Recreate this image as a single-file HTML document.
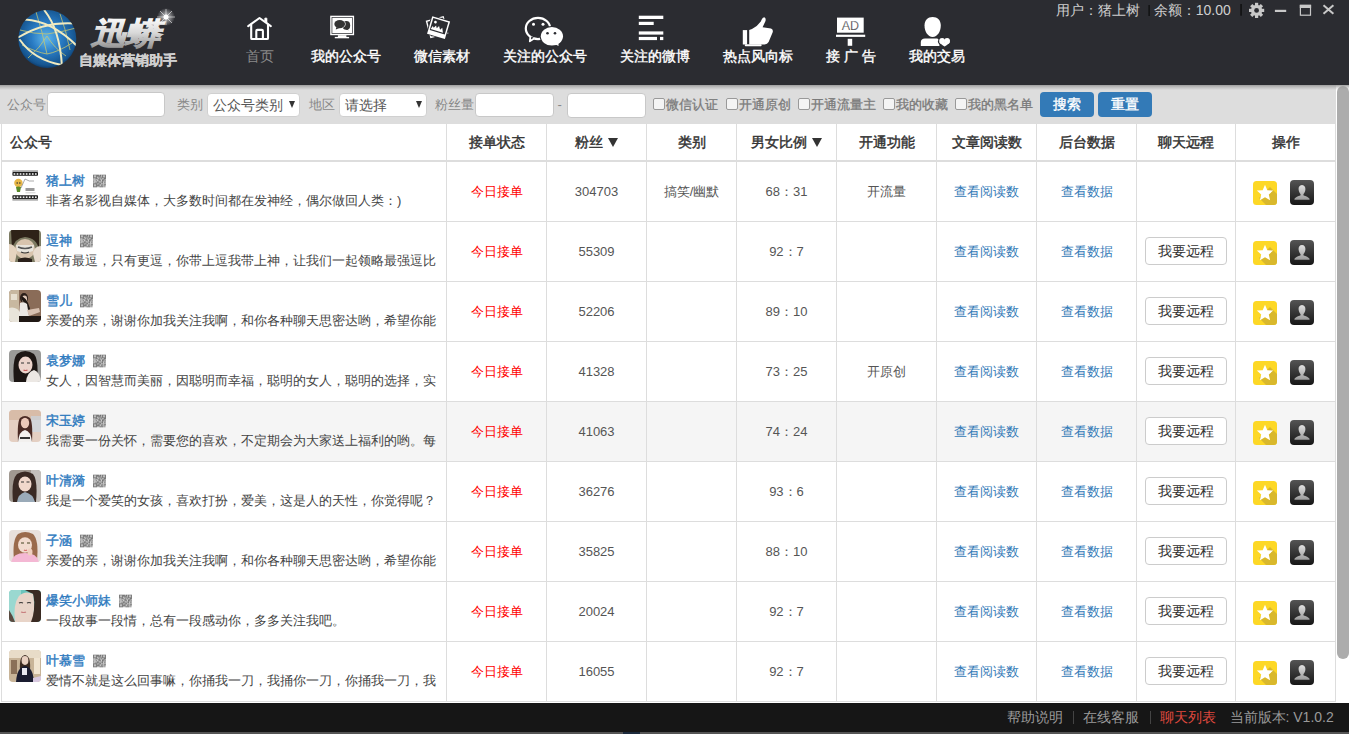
<!DOCTYPE html><html><head><meta charset="utf-8"><style>
*{box-sizing:border-box}
html,body{margin:0;padding:0;width:1349px;height:734px;overflow:hidden;background:#fff;font-family:"Liberation Sans",sans-serif;}
.abs{position:absolute}
#hdr{position:absolute;left:0;top:0;width:1349px;height:85px;background:#2b2c31}
.nav{position:absolute;top:0;height:85px;text-align:center}
.nav .lbl{position:absolute;left:-60px;right:-60px;top:46px;font-size:14px;line-height:20px;color:#fff;font-weight:normal;-webkit-text-stroke:0.4px #fff;white-space:nowrap}
.nav svg{position:absolute}
#tr{position:absolute;top:0;left:1056px;font-size:14px;line-height:20px;color:#cfcfcf;white-space:nowrap}
#filter{position:absolute;left:0;top:85px;width:1336px;height:39px;background:#dddddd}
.fl{position:absolute;top:0;line-height:39px;font-size:13px;color:#888;white-space:nowrap}
.inp{position:absolute;top:7px;height:24.5px;background:#fff;border-radius:4px;border:1px solid #c8c8c8}
.sel{position:absolute;top:7px;height:24px;background:#fff;border-radius:4px;font-size:14px;color:#555;line-height:22px;padding-left:5px;border:1px solid #d0d0d0}
.sarr{position:absolute;top:7.5px;width:0;height:0;border-left:3px solid transparent;border-right:3px solid transparent;border-top:7px solid #333}
.cb{position:absolute;top:13px;width:12px;height:12px;border:1px solid #999;border-radius:2px;background:#f4f4f4}
.btn{position:absolute;top:6px;width:54px;height:26px;background:#337ab7;border-radius:4px;color:#fff;font-size:14px;line-height:26px;text-align:center;font-weight:normal;-webkit-text-stroke:0.35px #fff}
#tbl{position:absolute;left:0;top:124px;width:1336px;height:578px;background:#fff}
.vl{position:absolute;width:1px;background:#dddddd}
.hl{position:absolute;height:1px;background:#dddddd;left:1px;width:1335px}
.th{position:absolute;top:124px;height:36px;line-height:36px;font-size:14px;font-weight:normal;-webkit-text-stroke:0.45px #333;color:#333;text-align:center;white-space:nowrap}
.tri{display:inline-block;width:0;height:0;border-left:5.3px solid transparent;border-right:5.3px solid transparent;border-top:9.3px solid #333;vertical-align:0px;margin-left:2px}
.td{position:absolute;font-size:13px;color:#555;text-align:center;white-space:nowrap}
.nm{position:absolute;left:46px;font-size:13px;font-weight:normal;-webkit-text-stroke:0.4px #2f7bbf;color:#2f7bbf;white-space:nowrap;line-height:16px}
.ds{position:absolute;left:46px;font-size:13px;color:#444;white-space:nowrap;line-height:16px}
.av{position:absolute;left:9px;width:32px;height:32px;border-radius:4px;overflow:hidden}
.qr{position:absolute;width:13px;height:14px}
.rbtn{position:absolute;left:1145px;width:82px;height:28px;border:1px solid #cccccc;border-radius:4px;background:#fff;font-size:14px;color:#333;line-height:26px;text-align:center}
.link{color:#337ab7}
.red{color:#ff0000}
#sb{position:absolute;left:1336px;top:85px;width:13px;height:618px;background:#fff}
#thumb{position:absolute;left:1337px;top:86px;width:12px;height:573px;background:#acacac;border-radius:6px}
#ftr{position:absolute;left:0;top:703px;width:1349px;height:29px;background:#161616}
#ftr2{position:absolute;left:0;top:732px;width:1349px;height:2px;background:#555}
.ft{position:absolute;top:703px;line-height:29px;font-size:14px;color:#9a9a9a;white-space:nowrap}
</style></head><body>
<div id="hdr"></div>
<svg class="abs" style="left:0;top:0" width="200" height="85" viewBox="0 0 200 85">
<defs>
<radialGradient id="gl" cx="0.5" cy="0.45" r="0.58" fx="0.48" fy="0.5"><stop offset="0" stop-color="#62b8ec"/><stop offset="0.45" stop-color="#2a7cc4"/><stop offset="0.85" stop-color="#16558f"/><stop offset="1" stop-color="#0a2e58"/></radialGradient>
<linearGradient id="sv" x1="0" y1="0" x2="0" y2="1"><stop offset="0" stop-color="#ffffff"/><stop offset="0.5" stop-color="#d8d8d8"/><stop offset="1" stop-color="#8a8a8a"/></linearGradient>
<linearGradient id="sv2" x1="0" y1="0" x2="0" y2="1"><stop offset="0" stop-color="#ffffff"/><stop offset="1" stop-color="#b0b0b0"/></linearGradient>
<radialGradient id="spk" cx="0.5" cy="0.5" r="0.5"><stop offset="0" stop-color="#fff" stop-opacity="1"/><stop offset="1" stop-color="#fff" stop-opacity="0"/></radialGradient>
</defs>
<defs><clipPath id="gcl"><circle cx="47.3" cy="39" r="29"/></clipPath></defs>
<circle cx="47.3" cy="39" r="29" fill="url(#gl)"/>
<g clip-path="url(#gcl)" fill="none">
<g stroke="#c9c870" stroke-width="0.9" opacity="0.85">
<path d="M22 45 Q36 52 47 54 Q58 52 72 43"/>
<path d="M28 58 Q40 48 47 36 Q54 48 66 56"/>
<path d="M20 30 Q34 34 47 34 Q62 32 76 28"/>
<path d="M36 12 Q42 30 47 54"/>
<path d="M60 14 Q66 30 70 50"/>
</g>
<g stroke="#f0eac0" stroke-width="2" stroke-linecap="round">
<path d="M19 37 Q45 21 76 23.5"/>
<path d="M25 19.5 Q52 21 77 46"/>
<path d="M20 40 Q34 60 62 65"/>
<path d="M44.5 10.5 Q60 30 62 67"/>
</g>
</g>
<g transform="translate(90.5 43.6) skewX(-16) scale(1.03 0.9)"><text x="0" y="0" font-family="Liberation Sans" font-size="34" font-weight="bold" fill="url(#sv)" stroke="url(#sv)" stroke-width="1.2" letter-spacing="0">迅蟒</text></g>
<g transform="translate(166 17)">
<circle r="9" fill="url(#spk)" opacity="0.8"/>
<path d="M-9 0 L9 0 M0 -8 L0 8 M-6 -6 L6 6 M-6 6 L6 -6" stroke="#fff" stroke-width="0.8" opacity="0.7"/>
<circle r="2.5" fill="#fff"/>
</g>
<text x="79" y="65" font-family="Liberation Sans" font-size="14" font-weight="bold" fill="url(#sv2)" stroke="#cfcfcf" stroke-width="0.3">自媒体营销助手</text>
</svg>
<svg class="abs" style="left:0;top:0" width="1349" height="85" viewBox="0 0 1349 85">
<!-- house -->
<g fill="none" stroke="#fff" stroke-width="2.1" stroke-linecap="round" stroke-linejoin="round">
<polyline points="248.2,26.2 259.5,18 270.8,26.2"/>
<path d="M251.2 24.5 V38.2 Q251.2 39 252 39 H267 Q268 39 268 38.2 V24.5"/>
<path d="M256.3 38.5 V30.9 Q256.3 29.9 257.3 29.9 H261.9 Q262.9 29.9 262.9 30.9 V38.5"/>
</g>
<path d="M264.7 21.2 V18.6 Q264.7 17.9 265.4 17.9 H266.3 Q267 17.9 267 18.6 V23" fill="#fff" stroke="#fff" stroke-width="0.6"/>
<!-- monitor -->
<rect x="330.2" y="15.7" width="23.9" height="19.5" fill="#fff"/>
<rect x="331.6" y="17.1" width="21.1" height="16.7" fill="#2b2c31"/>
<rect x="332.3" y="17.8" width="19.7" height="15.3" fill="#fff"/>
<ellipse cx="346.3" cy="25.4" rx="3.9" ry="4.3" fill="#333"/>
<path d="M347 28.5 L348.8 30.2 L345.5 29.5 Z" fill="#333"/>
<ellipse cx="339.7" cy="24.1" rx="6" ry="4.6" fill="#fff"/>
<ellipse cx="339.7" cy="24.1" rx="5.4" ry="4.1" fill="#333"/>
<path d="M336.2 27.2 L335.8 29.6 L339.5 28 Z" fill="#333"/>
<rect x="337.9" y="35.2" width="8.5" height="1.9" fill="#fff"/>
<rect x="334.8" y="36.9" width="14.3" height="1.4" fill="#fff"/>
<!-- photos -->
<g transform="translate(438.6 27.6)">
<g transform="translate(-1.6 -0.6) rotate(-15)"><rect x="-9.3" y="-9" width="18.6" height="18.2" fill="#fff"/><rect x="-7.9" y="-7.6" width="15.8" height="15.4" fill="#2b2c31"/></g>
<g transform="rotate(16.6)">
<rect x="-10.2" y="-10" width="20.4" height="20" fill="#2b2c31"/>
<rect x="-9.3" y="-9.1" width="18.6" height="18.3" fill="#fff"/>
<rect x="-7.8" y="-7.6" width="15.6" height="12.4" fill="#2b2c31"/>
<path d="M-7.2 3.6 L-6 0.2 L-4.6 1.6 L-3 -1.2 L-1.6 1.2 L0 -1.6 L2 1.6 L3.6 -0.8 L5.6 3.6 Z" fill="#fff"/>
<circle cx="-4.6" cy="-4.4" r="1.4" fill="#fff"/>
</g>
</g>
<!-- wechat -->
<g>
<ellipse cx="538" cy="28.5" rx="12.2" ry="10.6" fill="none" stroke="#fff" stroke-width="2.2"/>
<path d="M530.5 36 L529.8 41.3 L534.5 38.2" fill="#2b2c31" stroke="#fff" stroke-width="1.8" stroke-linejoin="round"/>
<circle cx="533.5" cy="24.3" r="1.5" fill="#fff"/>
<circle cx="543" cy="24.3" r="1.5" fill="#fff"/>
<ellipse cx="551.9" cy="36.3" rx="12.3" ry="10.4" fill="#2b2c31"/>
<ellipse cx="551.9" cy="36.3" rx="11.1" ry="9.3" fill="#fff"/>
<path d="M555.5 44.5 L558.6 46 L558.4 43" fill="#fff"/>
<circle cx="547.5" cy="33.2" r="1.3" fill="#2b2c31"/>
<circle cx="555" cy="33.2" r="1.3" fill="#2b2c31"/>
</g>
<!-- lines -->
<g fill="#fff">
<rect x="638.8" y="15.7" width="24.5" height="3.3"/>
<rect x="638.8" y="21.8" width="14.9" height="3.2"/>
<rect x="638.8" y="31.4" width="24.5" height="3.2"/>
<rect x="638.8" y="36.9" width="18.2" height="3.2"/>
<rect x="660" y="36.9" width="3.3" height="3.2"/>
</g>
<!-- thumbs -->
<g fill="#fff">
<rect x="742.8" y="30.1" width="4.3" height="14.4"/>
<path d="M749.2 29.9 L752 29 Q757.5 26.2 760.8 21.5 Q762.4 17.2 764.2 17.2 Q766.2 17.5 765.5 21 L762.6 27.3 L771 28.6 Q773.6 29.5 772.6 32.5 L768.6 42 Q767.4 44.4 764.6 44.4 L749.2 44.4 Z"/>
<rect x="744.8" y="44.3" width="16.8" height="1.9" rx="0.8"/>
</g>
<!-- AD -->
<rect x="837" y="17.6" width="26.7" height="15.1" fill="#fff"/>
<text x="850.4" y="30.2" text-anchor="middle" font-family="Liberation Sans" font-size="12.5" fill="#2b2c31" stroke="#fff" stroke-width="0.25">AD</text>
<rect x="836" y="34.7" width="29.2" height="2.2" fill="#fff"/>
<rect x="847.7" y="38.8" width="4.5" height="7" fill="#fff"/>
<!-- person heart -->
<g fill="#fff">
<path d="M932.6 16.9 C937.5 16.9 940.8 20 940.8 25.5 C940.8 31.5 937.5 36.9 932.6 36.9 C927.8 36.9 924.5 31.5 924.5 25.5 C924.5 20 927.8 16.9 932.6 16.9 Z"/>
<path d="M920.8 46 L920.8 42 Q921 38.6 925 38.4 L937 38.4 L939.4 39.5 L939.4 46 Z"/>
<g stroke="#2b2c31" stroke-width="2.2"><circle cx="942.1" cy="41" r="2.9"/><circle cx="947.1" cy="41" r="2.9"/><path d="M939.4 42.2 Q940 43.6 944.6 46.6 Q949.2 43.6 949.8 42.2 Z"/></g>
<circle cx="942.1" cy="41" r="2.9"/><circle cx="947.1" cy="41" r="2.9"/><path d="M939.4 42.2 Q940 43.6 944.6 46.6 Q949.2 43.6 949.8 42.2 Z"/>
</g>
<!-- top-right icons -->
<rect x="1148.5" y="5" width="1.2" height="11" fill="#0a0a0a"/>
<rect x="1240.4" y="4" width="1.3" height="11.7" fill="#0a0a0a"/>
<g transform="translate(1256.6 10.4)" fill="#c8c8c8">
<circle r="5.6"/>
<g id="tooth"><rect x="-1.6" y="-7.6" width="3.2" height="3.4"/></g>
<use href="#tooth" transform="rotate(45)"/><use href="#tooth" transform="rotate(90)"/><use href="#tooth" transform="rotate(135)"/>
<use href="#tooth" transform="rotate(180)"/><use href="#tooth" transform="rotate(225)"/><use href="#tooth" transform="rotate(270)"/><use href="#tooth" transform="rotate(315)"/>
<circle r="2.4" fill="#2b2c31"/>
</g>
<rect x="1274.9" y="9.8" width="11.3" height="2.2" fill="#c8c8c8"/>
<rect x="1300.4" y="5.4" width="10.1" height="9.8" fill="none" stroke="#c8c8c8" stroke-width="1.2"/>
<rect x="1299.8" y="4.8" width="11.3" height="3.2" fill="#c8c8c8"/>
<path d="M1323.5 5.2 L1333.4 13.8 M1333.4 5.2 L1323.5 13.8" stroke="#c8c8c8" stroke-width="2"/>
</svg>
<div class="nav" style="left:260px;width:0"><div class="lbl" style="color:#8a8a8a;font-weight:normal;-webkit-text-stroke:0">首页</div></div>
<div class="nav" style="left:345.8px;width:0"><div class="lbl" style="">我的公众号</div></div>
<div class="nav" style="left:441.9px;width:0"><div class="lbl" style="">微信素材</div></div>
<div class="nav" style="left:545px;width:0"><div class="lbl" style="">关注的公众号</div></div>
<div class="nav" style="left:655.2px;width:0"><div class="lbl" style="">关注的微博</div></div>
<div class="nav" style="left:758.3px;width:0"><div class="lbl" style="">热点风向标</div></div>
<div class="nav" style="left:851.2px;width:0"><div class="lbl" style="">接 广 告</div></div>
<div class="nav" style="left:936.8px;width:0"><div class="lbl" style="">我的交易</div></div>
<div id="tr">用户：猪上树<span style="display:inline-block;width:13.8px"></span>余额：10.00</div>
<div id="filter"></div>
<div class="fl" style="left:7px;top:85px">公众号</div>
<div class="inp" style="left:46.5px;top:92.2px;width:118.5px"></div>
<div class="fl" style="left:176.5px;top:85px">类别</div>
<div class="sel" style="left:206.7px;top:92.5px;width:93.3px">公众号类别<span class="sarr" style="left:81px"></span></div>
<div class="fl" style="left:308.5px;top:85px">地区</div>
<div class="sel" style="left:339px;top:92.5px;width:87.8px">请选择<span class="sarr" style="left:75.5px"></span></div>
<div class="fl" style="left:434.5px;top:85px">粉丝量</div>
<div class="inp" style="left:474.8px;top:92.5px;width:78.8px"></div>
<div class="fl" style="left:557.5px;top:85px">-</div>
<div class="inp" style="left:566.5px;top:93.2px;width:79px"></div>
<div class="cb" style="left:653px;top:98.3px"></div><div class="fl" style="left:665.5px;top:85px;color:#7a7a7a;-webkit-text-stroke:0.3px #7a7a7a">微信认证</div>
<div class="cb" style="left:726.2px;top:98.3px"></div><div class="fl" style="left:738.7px;top:85px;color:#7a7a7a;-webkit-text-stroke:0.3px #7a7a7a">开通原创</div>
<div class="cb" style="left:798.3px;top:98.3px"></div><div class="fl" style="left:810.8px;top:85px;color:#7a7a7a;-webkit-text-stroke:0.3px #7a7a7a">开通流量主</div>
<div class="cb" style="left:883.4px;top:98.3px"></div><div class="fl" style="left:895.9px;top:85px;color:#7a7a7a;-webkit-text-stroke:0.3px #7a7a7a">我的收藏</div>
<div class="cb" style="left:955.3px;top:98.3px"></div><div class="fl" style="left:967.8px;top:85px;color:#7a7a7a;-webkit-text-stroke:0.3px #7a7a7a">我的黑名单</div>
<div class="btn" style="left:1040.2px;top:92px;width:53.6px;height:25px;line-height:25px">搜索</div>
<div class="btn" style="left:1098px;top:92px;width:53.9px;height:25px;line-height:25px">重置</div>
<div id="tbl"></div>
<div class="abs" style="left:2px;top:402px;width:1333px;height:59px;background:#f5f5f5"></div>
<div class="vl" style="left:1px;top:124px;height:578px"></div>
<div class="vl" style="left:446px;top:124px;height:578px"></div>
<div class="vl" style="left:546px;top:124px;height:578px"></div>
<div class="vl" style="left:646px;top:124px;height:578px"></div>
<div class="vl" style="left:736px;top:124px;height:578px"></div>
<div class="vl" style="left:836px;top:124px;height:578px"></div>
<div class="vl" style="left:936px;top:124px;height:578px"></div>
<div class="vl" style="left:1036px;top:124px;height:578px"></div>
<div class="vl" style="left:1136px;top:124px;height:578px"></div>
<div class="vl" style="left:1235px;top:124px;height:578px"></div>
<div class="vl" style="left:1335px;top:124px;height:578px"></div>
<div class="hl" style="top:160px;height:2px"></div>

<div class="hl" style="top:221px"></div>
<div class="hl" style="top:281px"></div>
<div class="hl" style="top:341px"></div>
<div class="hl" style="top:401px"></div>
<div class="hl" style="top:461px"></div>
<div class="hl" style="top:521px"></div>
<div class="hl" style="top:581px"></div>
<div class="hl" style="top:641px"></div>
<div class="hl" style="top:701px"></div>
<div class="th" style="left:10px;text-align:left">公众号</div>
<div class="th" style="left:447px;width:99px">接单状态</div>
<div class="th" style="left:547px;width:99px">粉丝 <span class=tri></span></div>
<div class="th" style="left:647px;width:89px">类别</div>
<div class="th" style="left:737px;width:99px">男女比例 <span class=tri></span></div>
<div class="th" style="left:837px;width:99px">开通功能</div>
<div class="th" style="left:937px;width:99px">文章阅读数</div>
<div class="th" style="left:1037px;width:99px">后台数据</div>
<div class="th" style="left:1137px;width:98px">聊天远程</div>
<div class="th" style="left:1236px;width:99px">操作</div>
<svg width="0" height="0" style="position:absolute"><defs><symbol id="qrs" viewBox="0 0 13 13"><rect x="0" y="0" width="1" height="1" fill="#555555"/><rect x="1" y="0" width="1" height="1" fill="#555555"/><rect x="2" y="0" width="1" height="1" fill="#555555"/><rect x="3" y="0" width="1" height="1" fill="#555555"/><rect x="4" y="0" width="1" height="1" fill="#555555"/><rect x="5" y="0" width="1" height="1" fill="#555555"/><rect x="6" y="0" width="1" height="1" fill="#999999"/><rect x="7" y="0" width="1" height="1" fill="#444444"/><rect x="8" y="0" width="1" height="1" fill="#777777"/><rect x="9" y="0" width="1" height="1" fill="#555555"/><rect x="10" y="0" width="1" height="1" fill="#555555"/><rect x="11" y="0" width="1" height="1" fill="#555555"/><rect x="12" y="0" width="1" height="1" fill="#555555"/><rect x="0" y="1" width="1" height="1" fill="#555555"/><rect x="1" y="1" width="1" height="1" fill="#aaaaaa"/><rect x="2" y="1" width="1" height="1" fill="#aaaaaa"/><rect x="3" y="1" width="1" height="1" fill="#555555"/><rect x="4" y="1" width="1" height="1" fill="#444444"/><rect x="5" y="1" width="1" height="1" fill="#555555"/><rect x="6" y="1" width="1" height="1" fill="#777777"/><rect x="7" y="1" width="1" height="1" fill="#444444"/><rect x="8" y="1" width="1" height="1" fill="#aaaaaa"/><rect x="9" y="1" width="1" height="1" fill="#555555"/><rect x="10" y="1" width="1" height="1" fill="#aaaaaa"/><rect x="11" y="1" width="1" height="1" fill="#aaaaaa"/><rect x="12" y="1" width="1" height="1" fill="#555555"/><rect x="0" y="2" width="1" height="1" fill="#555555"/><rect x="1" y="2" width="1" height="1" fill="#aaaaaa"/><rect x="2" y="2" width="1" height="1" fill="#aaaaaa"/><rect x="3" y="2" width="1" height="1" fill="#555555"/><rect x="4" y="2" width="1" height="1" fill="#888888"/><rect x="5" y="2" width="1" height="1" fill="#666666"/><rect x="6" y="2" width="1" height="1" fill="#555555"/><rect x="7" y="2" width="1" height="1" fill="#777777"/><rect x="8" y="2" width="1" height="1" fill="#999999"/><rect x="9" y="2" width="1" height="1" fill="#555555"/><rect x="10" y="2" width="1" height="1" fill="#aaaaaa"/><rect x="11" y="2" width="1" height="1" fill="#aaaaaa"/><rect x="12" y="2" width="1" height="1" fill="#555555"/><rect x="0" y="3" width="1" height="1" fill="#555555"/><rect x="1" y="3" width="1" height="1" fill="#555555"/><rect x="2" y="3" width="1" height="1" fill="#555555"/><rect x="3" y="3" width="1" height="1" fill="#555555"/><rect x="4" y="3" width="1" height="1" fill="#bbbbbb"/><rect x="5" y="3" width="1" height="1" fill="#999999"/><rect x="6" y="3" width="1" height="1" fill="#888888"/><rect x="7" y="3" width="1" height="1" fill="#777777"/><rect x="8" y="3" width="1" height="1" fill="#666666"/><rect x="9" y="3" width="1" height="1" fill="#555555"/><rect x="10" y="3" width="1" height="1" fill="#555555"/><rect x="11" y="3" width="1" height="1" fill="#555555"/><rect x="12" y="3" width="1" height="1" fill="#555555"/><rect x="0" y="4" width="1" height="1" fill="#999999"/><rect x="1" y="4" width="1" height="1" fill="#bbbbbb"/><rect x="2" y="4" width="1" height="1" fill="#888888"/><rect x="3" y="4" width="1" height="1" fill="#555555"/><rect x="4" y="4" width="1" height="1" fill="#555555"/><rect x="5" y="4" width="1" height="1" fill="#aaaaaa"/><rect x="6" y="4" width="1" height="1" fill="#666666"/><rect x="7" y="4" width="1" height="1" fill="#999999"/><rect x="8" y="4" width="1" height="1" fill="#666666"/><rect x="9" y="4" width="1" height="1" fill="#bbbbbb"/><rect x="10" y="4" width="1" height="1" fill="#aaaaaa"/><rect x="11" y="4" width="1" height="1" fill="#444444"/><rect x="12" y="4" width="1" height="1" fill="#555555"/><rect x="0" y="5" width="1" height="1" fill="#999999"/><rect x="1" y="5" width="1" height="1" fill="#999999"/><rect x="2" y="5" width="1" height="1" fill="#999999"/><rect x="3" y="5" width="1" height="1" fill="#bbbbbb"/><rect x="4" y="5" width="1" height="1" fill="#bbbbbb"/><rect x="5" y="5" width="1" height="1" fill="#555555"/><rect x="6" y="5" width="1" height="1" fill="#555555"/><rect x="7" y="5" width="1" height="1" fill="#888888"/><rect x="8" y="5" width="1" height="1" fill="#bbbbbb"/><rect x="9" y="5" width="1" height="1" fill="#555555"/><rect x="10" y="5" width="1" height="1" fill="#444444"/><rect x="11" y="5" width="1" height="1" fill="#888888"/><rect x="12" y="5" width="1" height="1" fill="#bbbbbb"/><rect x="0" y="6" width="1" height="1" fill="#888888"/><rect x="1" y="6" width="1" height="1" fill="#aaaaaa"/><rect x="2" y="6" width="1" height="1" fill="#999999"/><rect x="3" y="6" width="1" height="1" fill="#444444"/><rect x="4" y="6" width="1" height="1" fill="#bbbbbb"/><rect x="5" y="6" width="1" height="1" fill="#999999"/><rect x="6" y="6" width="1" height="1" fill="#666666"/><rect x="7" y="6" width="1" height="1" fill="#555555"/><rect x="8" y="6" width="1" height="1" fill="#bbbbbb"/><rect x="9" y="6" width="1" height="1" fill="#444444"/><rect x="10" y="6" width="1" height="1" fill="#777777"/><rect x="11" y="6" width="1" height="1" fill="#888888"/><rect x="12" y="6" width="1" height="1" fill="#666666"/><rect x="0" y="7" width="1" height="1" fill="#777777"/><rect x="1" y="7" width="1" height="1" fill="#aaaaaa"/><rect x="2" y="7" width="1" height="1" fill="#aaaaaa"/><rect x="3" y="7" width="1" height="1" fill="#bbbbbb"/><rect x="4" y="7" width="1" height="1" fill="#555555"/><rect x="5" y="7" width="1" height="1" fill="#666666"/><rect x="6" y="7" width="1" height="1" fill="#bbbbbb"/><rect x="7" y="7" width="1" height="1" fill="#aaaaaa"/><rect x="8" y="7" width="1" height="1" fill="#888888"/><rect x="9" y="7" width="1" height="1" fill="#666666"/><rect x="10" y="7" width="1" height="1" fill="#aaaaaa"/><rect x="11" y="7" width="1" height="1" fill="#888888"/><rect x="12" y="7" width="1" height="1" fill="#aaaaaa"/><rect x="0" y="8" width="1" height="1" fill="#999999"/><rect x="1" y="8" width="1" height="1" fill="#aaaaaa"/><rect x="2" y="8" width="1" height="1" fill="#777777"/><rect x="3" y="8" width="1" height="1" fill="#666666"/><rect x="4" y="8" width="1" height="1" fill="#555555"/><rect x="5" y="8" width="1" height="1" fill="#666666"/><rect x="6" y="8" width="1" height="1" fill="#666666"/><rect x="7" y="8" width="1" height="1" fill="#777777"/><rect x="8" y="8" width="1" height="1" fill="#777777"/><rect x="9" y="8" width="1" height="1" fill="#444444"/><rect x="10" y="8" width="1" height="1" fill="#bbbbbb"/><rect x="11" y="8" width="1" height="1" fill="#666666"/><rect x="12" y="8" width="1" height="1" fill="#888888"/><rect x="0" y="9" width="1" height="1" fill="#555555"/><rect x="1" y="9" width="1" height="1" fill="#555555"/><rect x="2" y="9" width="1" height="1" fill="#555555"/><rect x="3" y="9" width="1" height="1" fill="#555555"/><rect x="4" y="9" width="1" height="1" fill="#999999"/><rect x="5" y="9" width="1" height="1" fill="#999999"/><rect x="6" y="9" width="1" height="1" fill="#666666"/><rect x="7" y="9" width="1" height="1" fill="#444444"/><rect x="8" y="9" width="1" height="1" fill="#bbbbbb"/><rect x="9" y="9" width="1" height="1" fill="#aaaaaa"/><rect x="10" y="9" width="1" height="1" fill="#aaaaaa"/><rect x="11" y="9" width="1" height="1" fill="#aaaaaa"/><rect x="12" y="9" width="1" height="1" fill="#aaaaaa"/><rect x="0" y="10" width="1" height="1" fill="#555555"/><rect x="1" y="10" width="1" height="1" fill="#aaaaaa"/><rect x="2" y="10" width="1" height="1" fill="#aaaaaa"/><rect x="3" y="10" width="1" height="1" fill="#555555"/><rect x="4" y="10" width="1" height="1" fill="#777777"/><rect x="5" y="10" width="1" height="1" fill="#555555"/><rect x="6" y="10" width="1" height="1" fill="#777777"/><rect x="7" y="10" width="1" height="1" fill="#bbbbbb"/><rect x="8" y="10" width="1" height="1" fill="#666666"/><rect x="9" y="10" width="1" height="1" fill="#555555"/><rect x="10" y="10" width="1" height="1" fill="#999999"/><rect x="11" y="10" width="1" height="1" fill="#444444"/><rect x="12" y="10" width="1" height="1" fill="#555555"/><rect x="0" y="11" width="1" height="1" fill="#555555"/><rect x="1" y="11" width="1" height="1" fill="#aaaaaa"/><rect x="2" y="11" width="1" height="1" fill="#aaaaaa"/><rect x="3" y="11" width="1" height="1" fill="#555555"/><rect x="4" y="11" width="1" height="1" fill="#444444"/><rect x="5" y="11" width="1" height="1" fill="#555555"/><rect x="6" y="11" width="1" height="1" fill="#777777"/><rect x="7" y="11" width="1" height="1" fill="#aaaaaa"/><rect x="8" y="11" width="1" height="1" fill="#666666"/><rect x="9" y="11" width="1" height="1" fill="#888888"/><rect x="10" y="11" width="1" height="1" fill="#999999"/><rect x="11" y="11" width="1" height="1" fill="#999999"/><rect x="12" y="11" width="1" height="1" fill="#bbbbbb"/><rect x="0" y="12" width="1" height="1" fill="#555555"/><rect x="1" y="12" width="1" height="1" fill="#555555"/><rect x="2" y="12" width="1" height="1" fill="#555555"/><rect x="3" y="12" width="1" height="1" fill="#555555"/><rect x="4" y="12" width="1" height="1" fill="#bbbbbb"/><rect x="5" y="12" width="1" height="1" fill="#bbbbbb"/><rect x="6" y="12" width="1" height="1" fill="#888888"/><rect x="7" y="12" width="1" height="1" fill="#555555"/><rect x="8" y="12" width="1" height="1" fill="#666666"/><rect x="9" y="12" width="1" height="1" fill="#555555"/><rect x="10" y="12" width="1" height="1" fill="#999999"/><rect x="11" y="12" width="1" height="1" fill="#888888"/><rect x="12" y="12" width="1" height="1" fill="#bbbbbb"/></symbol></defs></svg>
<div class="abs" style="left:11px;top:170px;width:28px;height:31px"><svg width="28" height="31" viewBox="0 0 28 31"><rect width="28" height="31" fill="#fff"/><rect x="1.4" y="0.2" width="25.6" height="1.8" fill="#aaa"/><rect x="1.4" y="2" width="25.6" height="3.8" fill="#1a1a1a" rx="0.8"/><rect x="1.4" y="25.3" width="25.6" height="3.6" fill="#1a1a1a" rx="0.8"/><rect x="1.4" y="28.9" width="25.6" height="1.8" fill="#aaa"/><rect x="2.60" y="3.2" width="1.7" height="1.6" fill="#eee"/><rect x="5.65" y="3.2" width="1.7" height="1.6" fill="#eee"/><rect x="8.70" y="3.2" width="1.7" height="1.6" fill="#eee"/><rect x="11.75" y="3.2" width="1.7" height="1.6" fill="#eee"/><rect x="14.80" y="3.2" width="1.7" height="1.6" fill="#eee"/><rect x="17.85" y="3.2" width="1.7" height="1.6" fill="#eee"/><rect x="20.90" y="3.2" width="1.7" height="1.6" fill="#eee"/><rect x="23.95" y="3.2" width="1.7" height="1.6" fill="#eee"/><rect x="2.60" y="26.4" width="1.7" height="1.6" fill="#eee"/><rect x="5.65" y="26.4" width="1.7" height="1.6" fill="#eee"/><rect x="8.70" y="26.4" width="1.7" height="1.6" fill="#eee"/><rect x="11.75" y="26.4" width="1.7" height="1.6" fill="#eee"/><rect x="14.80" y="26.4" width="1.7" height="1.6" fill="#eee"/><rect x="17.85" y="26.4" width="1.7" height="1.6" fill="#eee"/><rect x="20.90" y="26.4" width="1.7" height="1.6" fill="#eee"/><rect x="23.95" y="26.4" width="1.7" height="1.6" fill="#eee"/><circle cx="7.4" cy="13" r="4.2" fill="#e8b848"/><circle cx="6.2" cy="13" r="0.8" fill="#333"/><circle cx="8.8" cy="13" r="0.8" fill="#333"/><path d="M5 17 Q7 16 10 17 L9 22 L6 22 Z" fill="#5a8a2a"/><path d="M10 18 L14 9 M14 9 Q18 12 23 11" stroke="#555" stroke-width="0.5" fill="none"/><rect x="14.5" y="18" width="9" height="3" fill="#999"/><rect x="14.5" y="22.5" width="10" height="0.7" fill="#bbb"/></svg></div>
<div class="nm" style="top:173px">猪上树<span style="display:inline-block;width:9px"></span><svg class="qr" style="position:relative;vertical-align:-3px;margin-left:-1.4px" width="13" height="13" viewBox="0 0 13 13"><use href="#qrs"/></svg></div>
<div class="ds" style="top:192.7px">非著名影视自媒体，大多数时间都在发神经，偶尔做回人类：)</div>
<div class="td red" style="left:447px;width:99px;top:162px;height:59px;line-height:59px">今日接单</div>
<div class="td " style="left:547px;width:99px;top:162px;height:59px;line-height:59px">304703</div>
<div class="td " style="left:647px;width:89px;top:162px;height:59px;line-height:59px">搞笑/幽默</div>
<div class="td " style="left:737px;width:99px;top:162px;height:59px;line-height:59px">68：31</div>
<div class="td " style="left:837px;width:99px;top:162px;height:59px;line-height:59px">开流量</div>
<div class="td link" style="left:937px;width:99px;top:162px;height:59px;line-height:59px">查看阅读数</div>
<div class="td link" style="left:1037px;width:99px;top:162px;height:59px;line-height:59px">查看数据</div>
<div class="abs" style="left:1253px;top:181px;width:24px;height:24px"><svg width="24" height="24" viewBox="0 0 24 24"><defs><clipPath id="rc0"><rect width="24" height="24" rx="3.5"/></clipPath></defs><g clip-path="url(#rc0)"><rect width="24" height="24" fill="#fdd826"/><path d="M6 17 L13 24 L24 24 L24 13 L17 6 Z" fill="#d9b82c"/></g><path d="M12 3.8 L14.35 9.2 L20.2 9.6 L15.8 13.4 L17.1 19.2 L12 16.2 L6.9 19.2 L8.2 13.4 L3.8 9.6 L9.65 9.2 Z" fill="#fff"/></svg></div>
<div class="abs" style="left:1290px;top:180px;width:24px;height:25px"><svg width="24" height="25" viewBox="0 0 24 25"><defs><linearGradient id="ug0" x1="0" y1="0" x2="0" y2="1"><stop offset="0" stop-color="#555"/><stop offset="1" stop-color="#161616"/></linearGradient><linearGradient id="up0" x1="0" y1="0" x2="0" y2="1"><stop offset="0" stop-color="#e0e0e0"/><stop offset="1" stop-color="#9a9a9a"/></linearGradient></defs><rect x="0" y="0" width="24" height="25" rx="4" fill="url(#ug0)"/><path d="M12 5 C14.6 5 15.6 7.2 15.4 9.6 C15.2 12 14 13.6 13.4 14.2 L13.6 15.4 C16 16.2 18.6 17 19.4 18.6 L19.6 19.8 L4.4 19.8 L4.6 18.6 C5.4 17 8 16.2 10.4 15.4 L10.6 14.2 C10 13.6 8.8 12 8.6 9.6 C8.4 7.2 9.4 5 12 5 Z" fill="url(#up0)"/></svg></div>
<div class="av" style="top:230px"><svg width="32" height="32" viewBox="0 0 32 32"><rect width="32" height="32" fill="#7c7a62"/><path d="M2 0 H30 V20 Q28 8 16 7 Q5 8 3 20 Z" fill="#2e2218"/><ellipse cx="16" cy="19" rx="10" ry="10" fill="#d8c4ae"/><path d="M7 15 H25 L24 21 Q16 24 8 21 Z" fill="#e8e4dc"/><path d="M9 17 Q16 20 23 17" stroke="#555" stroke-width="1.5" fill="none"/><path d="M12 22 Q16 24 20 22" stroke="#333" stroke-width="1.2" fill="none"/><path d="M0 14 Q6 14 8 22 L6 32 H0 Z" fill="#e6d4c0"/><path d="M32 16 Q25 16 24 24 L26 32 H32 Z" fill="#e8dcd0"/><path d="M9 29 Q16 26 23 29 V32 H9 Z" fill="#2a201a"/></svg></div>
<div class="nm" style="top:233px">逗神<span style="display:inline-block;width:9px"></span><svg class="qr" style="position:relative;vertical-align:-3px;margin-left:-1.4px" width="13" height="13" viewBox="0 0 13 13"><use href="#qrs"/></svg></div>
<div class="ds" style="top:252.7px">没有最逗，只有更逗，你带上逗我带上神，让我们一起领略最强逗比</div>
<div class="td red" style="left:447px;width:99px;top:222px;height:59px;line-height:59px">今日接单</div>
<div class="td " style="left:547px;width:99px;top:222px;height:59px;line-height:59px">55309</div>
<div class="td " style="left:737px;width:99px;top:222px;height:59px;line-height:59px">92：7</div>
<div class="td link" style="left:937px;width:99px;top:222px;height:59px;line-height:59px">查看阅读数</div>
<div class="td link" style="left:1037px;width:99px;top:222px;height:59px;line-height:59px">查看数据</div>
<div class="rbtn" style="top:237px">我要远程</div>
<div class="abs" style="left:1253px;top:241px;width:24px;height:24px"><svg width="24" height="24" viewBox="0 0 24 24"><defs><clipPath id="rc1"><rect width="24" height="24" rx="3.5"/></clipPath></defs><g clip-path="url(#rc1)"><rect width="24" height="24" fill="#fdd826"/><path d="M6 17 L13 24 L24 24 L24 13 L17 6 Z" fill="#d9b82c"/></g><path d="M12 3.8 L14.35 9.2 L20.2 9.6 L15.8 13.4 L17.1 19.2 L12 16.2 L6.9 19.2 L8.2 13.4 L3.8 9.6 L9.65 9.2 Z" fill="#fff"/></svg></div>
<div class="abs" style="left:1290px;top:240px;width:24px;height:25px"><svg width="24" height="25" viewBox="0 0 24 25"><defs><linearGradient id="ug1" x1="0" y1="0" x2="0" y2="1"><stop offset="0" stop-color="#555"/><stop offset="1" stop-color="#161616"/></linearGradient><linearGradient id="up1" x1="0" y1="0" x2="0" y2="1"><stop offset="0" stop-color="#e0e0e0"/><stop offset="1" stop-color="#9a9a9a"/></linearGradient></defs><rect x="0" y="0" width="24" height="25" rx="4" fill="url(#ug1)"/><path d="M12 5 C14.6 5 15.6 7.2 15.4 9.6 C15.2 12 14 13.6 13.4 14.2 L13.6 15.4 C16 16.2 18.6 17 19.4 18.6 L19.6 19.8 L4.4 19.8 L4.6 18.6 C5.4 17 8 16.2 10.4 15.4 L10.6 14.2 C10 13.6 8.8 12 8.6 9.6 C8.4 7.2 9.4 5 12 5 Z" fill="url(#up1)"/></svg></div>
<div class="av" style="top:290px"><svg width="32" height="32" viewBox="0 0 32 32"><rect width="32" height="32" fill="#8a6c58"/><rect x="0" y="0" width="10" height="32" fill="#c8b8a0"/><rect x="2" y="4" width="6" height="6" fill="#e8e0d0"/><path d="M0 18 Q8 16 12 24 V32 H0 Z" fill="#e8e4da"/><ellipse cx="15" cy="8" rx="4" ry="5" fill="#2a1e18"/><ellipse cx="15.5" cy="9" rx="2.6" ry="3.4" fill="#e0c8b8"/><path d="M13 6 Q20 10 22 24 L20 26 Q17 14 13 10 Z" fill="#1e1612"/><path d="M11 13 Q15 11 18 14 L20 26 H10 Z" fill="#ece8e4"/><path d="M18 20 L30 18 L31 22 L20 26 Z" fill="#d8c0b0"/><path d="M10 26 H32 V32 H10 Z" fill="#201814"/></svg></div>
<div class="nm" style="top:293px">雪儿<span style="display:inline-block;width:9px"></span><svg class="qr" style="position:relative;vertical-align:-3px;margin-left:-1.4px" width="13" height="13" viewBox="0 0 13 13"><use href="#qrs"/></svg></div>
<div class="ds" style="top:312.7px">亲爱的亲，谢谢你加我关注我啊，和你各种聊天思密达哟，希望你能</div>
<div class="td red" style="left:447px;width:99px;top:282px;height:59px;line-height:59px">今日接单</div>
<div class="td " style="left:547px;width:99px;top:282px;height:59px;line-height:59px">52206</div>
<div class="td " style="left:737px;width:99px;top:282px;height:59px;line-height:59px">89：10</div>
<div class="td link" style="left:937px;width:99px;top:282px;height:59px;line-height:59px">查看阅读数</div>
<div class="td link" style="left:1037px;width:99px;top:282px;height:59px;line-height:59px">查看数据</div>
<div class="rbtn" style="top:297px">我要远程</div>
<div class="abs" style="left:1253px;top:301px;width:24px;height:24px"><svg width="24" height="24" viewBox="0 0 24 24"><defs><clipPath id="rc2"><rect width="24" height="24" rx="3.5"/></clipPath></defs><g clip-path="url(#rc2)"><rect width="24" height="24" fill="#fdd826"/><path d="M6 17 L13 24 L24 24 L24 13 L17 6 Z" fill="#d9b82c"/></g><path d="M12 3.8 L14.35 9.2 L20.2 9.6 L15.8 13.4 L17.1 19.2 L12 16.2 L6.9 19.2 L8.2 13.4 L3.8 9.6 L9.65 9.2 Z" fill="#fff"/></svg></div>
<div class="abs" style="left:1290px;top:300px;width:24px;height:25px"><svg width="24" height="25" viewBox="0 0 24 25"><defs><linearGradient id="ug2" x1="0" y1="0" x2="0" y2="1"><stop offset="0" stop-color="#555"/><stop offset="1" stop-color="#161616"/></linearGradient><linearGradient id="up2" x1="0" y1="0" x2="0" y2="1"><stop offset="0" stop-color="#e0e0e0"/><stop offset="1" stop-color="#9a9a9a"/></linearGradient></defs><rect x="0" y="0" width="24" height="25" rx="4" fill="url(#ug2)"/><path d="M12 5 C14.6 5 15.6 7.2 15.4 9.6 C15.2 12 14 13.6 13.4 14.2 L13.6 15.4 C16 16.2 18.6 17 19.4 18.6 L19.6 19.8 L4.4 19.8 L4.6 18.6 C5.4 17 8 16.2 10.4 15.4 L10.6 14.2 C10 13.6 8.8 12 8.6 9.6 C8.4 7.2 9.4 5 12 5 Z" fill="url(#up2)"/></svg></div>
<div class="av" style="top:350px"><svg width="32" height="32" viewBox="0 0 32 32"><rect width="32" height="32" fill="#9a9a98"/><path d="M5 32 Q3 10 8 4 Q16 -2 25 4 Q30 10 28 32 Z" fill="#1c1614"/><ellipse cx="16.5" cy="15" rx="7" ry="8.5" fill="#ecd4cc"/><path d="M12 13 h3 M18 13 h3" stroke="#333" stroke-width="1.2"/><path d="M14.5 20 Q16.5 21 18.5 20" stroke="#c86060" stroke-width="1.2" fill="none"/><path d="M17 32 Q18 22 25 20 Q31 22 32 32 Z" fill="#ece8e4"/></svg></div>
<div class="nm" style="top:353px">袁梦娜<span style="display:inline-block;width:9px"></span><svg class="qr" style="position:relative;vertical-align:-3px;margin-left:-1.4px" width="13" height="13" viewBox="0 0 13 13"><use href="#qrs"/></svg></div>
<div class="ds" style="top:372.7px">女人，因智慧而美丽，因聪明而幸福，聪明的女人，聪明的选择，实</div>
<div class="td red" style="left:447px;width:99px;top:342px;height:59px;line-height:59px">今日接单</div>
<div class="td " style="left:547px;width:99px;top:342px;height:59px;line-height:59px">41328</div>
<div class="td " style="left:737px;width:99px;top:342px;height:59px;line-height:59px">73：25</div>
<div class="td " style="left:837px;width:99px;top:342px;height:59px;line-height:59px">开原创</div>
<div class="td link" style="left:937px;width:99px;top:342px;height:59px;line-height:59px">查看阅读数</div>
<div class="td link" style="left:1037px;width:99px;top:342px;height:59px;line-height:59px">查看数据</div>
<div class="rbtn" style="top:357px">我要远程</div>
<div class="abs" style="left:1253px;top:361px;width:24px;height:24px"><svg width="24" height="24" viewBox="0 0 24 24"><defs><clipPath id="rc3"><rect width="24" height="24" rx="3.5"/></clipPath></defs><g clip-path="url(#rc3)"><rect width="24" height="24" fill="#fdd826"/><path d="M6 17 L13 24 L24 24 L24 13 L17 6 Z" fill="#d9b82c"/></g><path d="M12 3.8 L14.35 9.2 L20.2 9.6 L15.8 13.4 L17.1 19.2 L12 16.2 L6.9 19.2 L8.2 13.4 L3.8 9.6 L9.65 9.2 Z" fill="#fff"/></svg></div>
<div class="abs" style="left:1290px;top:360px;width:24px;height:25px"><svg width="24" height="25" viewBox="0 0 24 25"><defs><linearGradient id="ug3" x1="0" y1="0" x2="0" y2="1"><stop offset="0" stop-color="#555"/><stop offset="1" stop-color="#161616"/></linearGradient><linearGradient id="up3" x1="0" y1="0" x2="0" y2="1"><stop offset="0" stop-color="#e0e0e0"/><stop offset="1" stop-color="#9a9a9a"/></linearGradient></defs><rect x="0" y="0" width="24" height="25" rx="4" fill="url(#ug3)"/><path d="M12 5 C14.6 5 15.6 7.2 15.4 9.6 C15.2 12 14 13.6 13.4 14.2 L13.6 15.4 C16 16.2 18.6 17 19.4 18.6 L19.6 19.8 L4.4 19.8 L4.6 18.6 C5.4 17 8 16.2 10.4 15.4 L10.6 14.2 C10 13.6 8.8 12 8.6 9.6 C8.4 7.2 9.4 5 12 5 Z" fill="url(#up3)"/></svg></div>
<div class="av" style="top:410px"><svg width="32" height="32" viewBox="0 0 32 32"><rect width="32" height="32" fill="#e4cfc2"/><rect x="0" y="0" width="32" height="10" fill="#d8bca8"/><rect x="22" y="6" width="10" height="16" fill="#c8d8e8" opacity="0.6"/><path d="M9 32 Q8 12 11 8 Q16 4 21 8 Q24 12 23 32 Z" fill="#4a2a24"/><ellipse cx="16" cy="13" rx="4.2" ry="5.2" fill="#ecc8b8"/><path d="M9 32 Q10 21 16 20 Q22 21 23 32 Z" fill="#f2f0ee"/><path d="M11 28 h10" stroke="#333" stroke-width="2"/></svg></div>
<div class="nm" style="top:413px">宋玉婷<span style="display:inline-block;width:9px"></span><svg class="qr" style="position:relative;vertical-align:-3px;margin-left:-1.4px" width="13" height="13" viewBox="0 0 13 13"><use href="#qrs"/></svg></div>
<div class="ds" style="top:432.7px">我需要一份关怀，需要您的喜欢，不定期会为大家送上福利的哟。每</div>
<div class="td red" style="left:447px;width:99px;top:402px;height:59px;line-height:59px">今日接单</div>
<div class="td " style="left:547px;width:99px;top:402px;height:59px;line-height:59px">41063</div>
<div class="td " style="left:737px;width:99px;top:402px;height:59px;line-height:59px">74：24</div>
<div class="td link" style="left:937px;width:99px;top:402px;height:59px;line-height:59px">查看阅读数</div>
<div class="td link" style="left:1037px;width:99px;top:402px;height:59px;line-height:59px">查看数据</div>
<div class="rbtn" style="top:417px">我要远程</div>
<div class="abs" style="left:1253px;top:421px;width:24px;height:24px"><svg width="24" height="24" viewBox="0 0 24 24"><defs><clipPath id="rc4"><rect width="24" height="24" rx="3.5"/></clipPath></defs><g clip-path="url(#rc4)"><rect width="24" height="24" fill="#fdd826"/><path d="M6 17 L13 24 L24 24 L24 13 L17 6 Z" fill="#d9b82c"/></g><path d="M12 3.8 L14.35 9.2 L20.2 9.6 L15.8 13.4 L17.1 19.2 L12 16.2 L6.9 19.2 L8.2 13.4 L3.8 9.6 L9.65 9.2 Z" fill="#fff"/></svg></div>
<div class="abs" style="left:1290px;top:420px;width:24px;height:25px"><svg width="24" height="25" viewBox="0 0 24 25"><defs><linearGradient id="ug4" x1="0" y1="0" x2="0" y2="1"><stop offset="0" stop-color="#555"/><stop offset="1" stop-color="#161616"/></linearGradient><linearGradient id="up4" x1="0" y1="0" x2="0" y2="1"><stop offset="0" stop-color="#e0e0e0"/><stop offset="1" stop-color="#9a9a9a"/></linearGradient></defs><rect x="0" y="0" width="24" height="25" rx="4" fill="url(#ug4)"/><path d="M12 5 C14.6 5 15.6 7.2 15.4 9.6 C15.2 12 14 13.6 13.4 14.2 L13.6 15.4 C16 16.2 18.6 17 19.4 18.6 L19.6 19.8 L4.4 19.8 L4.6 18.6 C5.4 17 8 16.2 10.4 15.4 L10.6 14.2 C10 13.6 8.8 12 8.6 9.6 C8.4 7.2 9.4 5 12 5 Z" fill="url(#up4)"/></svg></div>
<div class="av" style="top:470px"><svg width="32" height="32" viewBox="0 0 32 32"><rect width="32" height="32" fill="#a09890"/><rect x="22" y="0" width="10" height="32" fill="#c4c0bc"/><path d="M4 32 Q2 10 8 4 Q16 -1 24 4 Q29 10 27 32 Z" fill="#3a2a24"/><ellipse cx="16" cy="14" rx="6.5" ry="7.5" fill="#f0d8cc"/><path d="M12 12 h3 M17.5 12 h3" stroke="#333" stroke-width="1"/><path d="M8 32 Q9 24 16 22 Q24 24 26 32 Z" fill="#9aaab8"/></svg></div>
<div class="nm" style="top:473px">叶清漪<span style="display:inline-block;width:9px"></span><svg class="qr" style="position:relative;vertical-align:-3px;margin-left:-1.4px" width="13" height="13" viewBox="0 0 13 13"><use href="#qrs"/></svg></div>
<div class="ds" style="top:492.7px">我是一个爱笑的女孩，喜欢打扮，爱美，这是人的天性，你觉得呢？</div>
<div class="td red" style="left:447px;width:99px;top:462px;height:59px;line-height:59px">今日接单</div>
<div class="td " style="left:547px;width:99px;top:462px;height:59px;line-height:59px">36276</div>
<div class="td " style="left:737px;width:99px;top:462px;height:59px;line-height:59px">93：6</div>
<div class="td link" style="left:937px;width:99px;top:462px;height:59px;line-height:59px">查看阅读数</div>
<div class="td link" style="left:1037px;width:99px;top:462px;height:59px;line-height:59px">查看数据</div>
<div class="rbtn" style="top:477px">我要远程</div>
<div class="abs" style="left:1253px;top:481px;width:24px;height:24px"><svg width="24" height="24" viewBox="0 0 24 24"><defs><clipPath id="rc5"><rect width="24" height="24" rx="3.5"/></clipPath></defs><g clip-path="url(#rc5)"><rect width="24" height="24" fill="#fdd826"/><path d="M6 17 L13 24 L24 24 L24 13 L17 6 Z" fill="#d9b82c"/></g><path d="M12 3.8 L14.35 9.2 L20.2 9.6 L15.8 13.4 L17.1 19.2 L12 16.2 L6.9 19.2 L8.2 13.4 L3.8 9.6 L9.65 9.2 Z" fill="#fff"/></svg></div>
<div class="abs" style="left:1290px;top:480px;width:24px;height:25px"><svg width="24" height="25" viewBox="0 0 24 25"><defs><linearGradient id="ug5" x1="0" y1="0" x2="0" y2="1"><stop offset="0" stop-color="#555"/><stop offset="1" stop-color="#161616"/></linearGradient><linearGradient id="up5" x1="0" y1="0" x2="0" y2="1"><stop offset="0" stop-color="#e0e0e0"/><stop offset="1" stop-color="#9a9a9a"/></linearGradient></defs><rect x="0" y="0" width="24" height="25" rx="4" fill="url(#ug5)"/><path d="M12 5 C14.6 5 15.6 7.2 15.4 9.6 C15.2 12 14 13.6 13.4 14.2 L13.6 15.4 C16 16.2 18.6 17 19.4 18.6 L19.6 19.8 L4.4 19.8 L4.6 18.6 C5.4 17 8 16.2 10.4 15.4 L10.6 14.2 C10 13.6 8.8 12 8.6 9.6 C8.4 7.2 9.4 5 12 5 Z" fill="url(#up5)"/></svg></div>
<div class="av" style="top:530px"><svg width="32" height="32" viewBox="0 0 32 32"><rect width="32" height="32" fill="#e8e0dc"/><path d="M5 30 Q3 10 9 4 Q16 0 24 4 Q30 10 28 30 Z" fill="#9a6a4c"/><ellipse cx="16" cy="15" rx="7" ry="7.8" fill="#f2dcd0"/><path d="M12 13 h3 M18 13 h3" stroke="#442" stroke-width="1"/><path d="M15 20 Q16.5 21 18 20" stroke="#d87070" stroke-width="1.2" fill="none"/><path d="M2 32 Q4 23 16 23 Q28 23 30 32 Z" fill="#f4b8d4"/><ellipse cx="21" cy="22" rx="2.5" ry="3.5" fill="#f0d0c0"/></svg></div>
<div class="nm" style="top:533px">子涵<span style="display:inline-block;width:9px"></span><svg class="qr" style="position:relative;vertical-align:-3px;margin-left:-1.4px" width="13" height="13" viewBox="0 0 13 13"><use href="#qrs"/></svg></div>
<div class="ds" style="top:552.7px">亲爱的亲，谢谢你加我关注我啊，和你各种聊天思密达哟，希望你能</div>
<div class="td red" style="left:447px;width:99px;top:522px;height:59px;line-height:59px">今日接单</div>
<div class="td " style="left:547px;width:99px;top:522px;height:59px;line-height:59px">35825</div>
<div class="td " style="left:737px;width:99px;top:522px;height:59px;line-height:59px">88：10</div>
<div class="td link" style="left:937px;width:99px;top:522px;height:59px;line-height:59px">查看阅读数</div>
<div class="td link" style="left:1037px;width:99px;top:522px;height:59px;line-height:59px">查看数据</div>
<div class="rbtn" style="top:537px">我要远程</div>
<div class="abs" style="left:1253px;top:541px;width:24px;height:24px"><svg width="24" height="24" viewBox="0 0 24 24"><defs><clipPath id="rc6"><rect width="24" height="24" rx="3.5"/></clipPath></defs><g clip-path="url(#rc6)"><rect width="24" height="24" fill="#fdd826"/><path d="M6 17 L13 24 L24 24 L24 13 L17 6 Z" fill="#d9b82c"/></g><path d="M12 3.8 L14.35 9.2 L20.2 9.6 L15.8 13.4 L17.1 19.2 L12 16.2 L6.9 19.2 L8.2 13.4 L3.8 9.6 L9.65 9.2 Z" fill="#fff"/></svg></div>
<div class="abs" style="left:1290px;top:540px;width:24px;height:25px"><svg width="24" height="25" viewBox="0 0 24 25"><defs><linearGradient id="ug6" x1="0" y1="0" x2="0" y2="1"><stop offset="0" stop-color="#555"/><stop offset="1" stop-color="#161616"/></linearGradient><linearGradient id="up6" x1="0" y1="0" x2="0" y2="1"><stop offset="0" stop-color="#e0e0e0"/><stop offset="1" stop-color="#9a9a9a"/></linearGradient></defs><rect x="0" y="0" width="24" height="25" rx="4" fill="url(#ug6)"/><path d="M12 5 C14.6 5 15.6 7.2 15.4 9.6 C15.2 12 14 13.6 13.4 14.2 L13.6 15.4 C16 16.2 18.6 17 19.4 18.6 L19.6 19.8 L4.4 19.8 L4.6 18.6 C5.4 17 8 16.2 10.4 15.4 L10.6 14.2 C10 13.6 8.8 12 8.6 9.6 C8.4 7.2 9.4 5 12 5 Z" fill="url(#up6)"/></svg></div>
<div class="av" style="top:590px"><svg width="32" height="32" viewBox="0 0 32 32"><rect width="32" height="32" fill="#6cc4bc"/><rect x="0" y="0" width="12" height="32" fill="#9ad8d0"/><path d="M16 0 H32 V32 H20 Q28 20 24 4 Z" fill="#3a2a22"/><path d="M6 32 Q4 14 10 6 Q16 0 24 4 Q27 20 22 32 Z" fill="#e8d4c8"/><path d="M10 13 Q12 12 14 13 M18 13 Q20 12 22 13" stroke="#333" stroke-width="1.2" fill="none"/><path d="M12 22 Q15 23 17 22" stroke="#c88080" stroke-width="1.2" fill="none"/><path d="M0 20 Q4 26 6 32 H0 Z" fill="#5a4a40"/></svg></div>
<div class="nm" style="top:593px">爆笑小师妹<span style="display:inline-block;width:9px"></span><svg class="qr" style="position:relative;vertical-align:-3px;margin-left:-1.4px" width="13" height="13" viewBox="0 0 13 13"><use href="#qrs"/></svg></div>
<div class="ds" style="top:612.7px">一段故事一段情，总有一段感动你，多多关注我吧。</div>
<div class="td red" style="left:447px;width:99px;top:582px;height:59px;line-height:59px">今日接单</div>
<div class="td " style="left:547px;width:99px;top:582px;height:59px;line-height:59px">20024</div>
<div class="td " style="left:737px;width:99px;top:582px;height:59px;line-height:59px">92：7</div>
<div class="td link" style="left:937px;width:99px;top:582px;height:59px;line-height:59px">查看阅读数</div>
<div class="td link" style="left:1037px;width:99px;top:582px;height:59px;line-height:59px">查看数据</div>
<div class="rbtn" style="top:597px">我要远程</div>
<div class="abs" style="left:1253px;top:601px;width:24px;height:24px"><svg width="24" height="24" viewBox="0 0 24 24"><defs><clipPath id="rc7"><rect width="24" height="24" rx="3.5"/></clipPath></defs><g clip-path="url(#rc7)"><rect width="24" height="24" fill="#fdd826"/><path d="M6 17 L13 24 L24 24 L24 13 L17 6 Z" fill="#d9b82c"/></g><path d="M12 3.8 L14.35 9.2 L20.2 9.6 L15.8 13.4 L17.1 19.2 L12 16.2 L6.9 19.2 L8.2 13.4 L3.8 9.6 L9.65 9.2 Z" fill="#fff"/></svg></div>
<div class="abs" style="left:1290px;top:600px;width:24px;height:25px"><svg width="24" height="25" viewBox="0 0 24 25"><defs><linearGradient id="ug7" x1="0" y1="0" x2="0" y2="1"><stop offset="0" stop-color="#555"/><stop offset="1" stop-color="#161616"/></linearGradient><linearGradient id="up7" x1="0" y1="0" x2="0" y2="1"><stop offset="0" stop-color="#e0e0e0"/><stop offset="1" stop-color="#9a9a9a"/></linearGradient></defs><rect x="0" y="0" width="24" height="25" rx="4" fill="url(#ug7)"/><path d="M12 5 C14.6 5 15.6 7.2 15.4 9.6 C15.2 12 14 13.6 13.4 14.2 L13.6 15.4 C16 16.2 18.6 17 19.4 18.6 L19.6 19.8 L4.4 19.8 L4.6 18.6 C5.4 17 8 16.2 10.4 15.4 L10.6 14.2 C10 13.6 8.8 12 8.6 9.6 C8.4 7.2 9.4 5 12 5 Z" fill="url(#up7)"/></svg></div>
<div class="av" style="top:650px"><svg width="32" height="32" viewBox="0 0 32 32"><rect width="32" height="32" fill="#c8b498"/><rect x="0" y="0" width="32" height="8" fill="#e8dcc8"/><rect x="2" y="10" width="6" height="14" fill="#8a7058"/><rect x="25" y="8" width="6" height="16" fill="#f0e4d0"/><path d="M11 20 Q10 6 16 5 Q22 6 21 20 Z" fill="#3a2a20"/><ellipse cx="16" cy="10.5" rx="3.4" ry="4.4" fill="#e8d0c0"/><path d="M7 32 Q8 17 16 16 Q24 17 25 32 Z" fill="#1a1c30"/><rect x="13" y="18" width="5" height="7" fill="#e8e8f0"/><path d="M24 28 L32 26 V32 H24 Z" fill="#d8c8e0"/></svg></div>
<div class="nm" style="top:653px">叶慕雪<span style="display:inline-block;width:9px"></span><svg class="qr" style="position:relative;vertical-align:-3px;margin-left:-1.4px" width="13" height="13" viewBox="0 0 13 13"><use href="#qrs"/></svg></div>
<div class="ds" style="top:672.7px">爱情不就是这么回事嘛，你捅我一刀，我捅你一刀，你捅我一刀，我</div>
<div class="td red" style="left:447px;width:99px;top:642px;height:59px;line-height:59px">今日接单</div>
<div class="td " style="left:547px;width:99px;top:642px;height:59px;line-height:59px">16055</div>
<div class="td " style="left:737px;width:99px;top:642px;height:59px;line-height:59px">92：7</div>
<div class="td link" style="left:937px;width:99px;top:642px;height:59px;line-height:59px">查看阅读数</div>
<div class="td link" style="left:1037px;width:99px;top:642px;height:59px;line-height:59px">查看数据</div>
<div class="rbtn" style="top:657px">我要远程</div>
<div class="abs" style="left:1253px;top:661px;width:24px;height:24px"><svg width="24" height="24" viewBox="0 0 24 24"><defs><clipPath id="rc8"><rect width="24" height="24" rx="3.5"/></clipPath></defs><g clip-path="url(#rc8)"><rect width="24" height="24" fill="#fdd826"/><path d="M6 17 L13 24 L24 24 L24 13 L17 6 Z" fill="#d9b82c"/></g><path d="M12 3.8 L14.35 9.2 L20.2 9.6 L15.8 13.4 L17.1 19.2 L12 16.2 L6.9 19.2 L8.2 13.4 L3.8 9.6 L9.65 9.2 Z" fill="#fff"/></svg></div>
<div class="abs" style="left:1290px;top:660px;width:24px;height:25px"><svg width="24" height="25" viewBox="0 0 24 25"><defs><linearGradient id="ug8" x1="0" y1="0" x2="0" y2="1"><stop offset="0" stop-color="#555"/><stop offset="1" stop-color="#161616"/></linearGradient><linearGradient id="up8" x1="0" y1="0" x2="0" y2="1"><stop offset="0" stop-color="#e0e0e0"/><stop offset="1" stop-color="#9a9a9a"/></linearGradient></defs><rect x="0" y="0" width="24" height="25" rx="4" fill="url(#ug8)"/><path d="M12 5 C14.6 5 15.6 7.2 15.4 9.6 C15.2 12 14 13.6 13.4 14.2 L13.6 15.4 C16 16.2 18.6 17 19.4 18.6 L19.6 19.8 L4.4 19.8 L4.6 18.6 C5.4 17 8 16.2 10.4 15.4 L10.6 14.2 C10 13.6 8.8 12 8.6 9.6 C8.4 7.2 9.4 5 12 5 Z" fill="url(#up8)"/></svg></div>
<div id="sb"></div><div id="thumb"></div>
<div class="abs" style="left:0;top:85px;width:1349px;height:5px;background:linear-gradient(rgba(150,150,150,0.9),rgba(150,150,150,0.45) 40%,rgba(200,200,200,0) 100%)"></div>
<div id="ftr"></div><div id="ftr2"></div>
<div class="abs" style="left:623px;top:732px;width:17px;height:2px;background:#1c2a3c"></div>
<div class="ft" style="left:1007px">帮助说明</div>
<div class="abs" style="left:1073px;top:711px;width:1px;height:13px;background:#444"></div>
<div class="ft" style="left:1083px">在线客服</div>
<div class="abs" style="left:1149.5px;top:711px;width:1px;height:13px;background:#444"></div>
<div class="ft" style="left:1159.5px;color:#e0493e">聊天列表</div>
<div class="ft" style="left:1229.5px">当前版本: V1.0.2</div>
</body></html>
